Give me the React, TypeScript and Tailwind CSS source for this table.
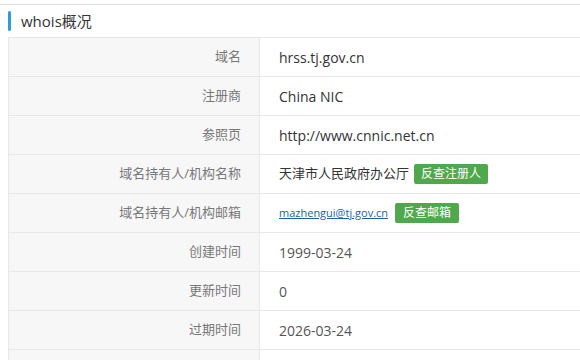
const rows: { label: string; value: React.ReactNode }[] = [
  { label: '域名', value: 'hrss.tj.gov.cn' },
  { label: '注册商', value: 'China NIC' },
  { label: '参照页', value: 'http://www.cnnic.net.cn' },
  {
    label: '域名持有人/机构名称',
    value: (
      <span className="flex items-center gap-[5px]">
        <span className="text-[13px]">天津市人民政府办公厅</span>
        <span className="h-[20px] px-[7px] rounded-[2px] bg-[#4fa84b] text-white text-[12px] leading-[20px]">反查注册人</span>
      </span>
    ),
  },
  {
    label: '域名持有人/机构邮箱',
    value: (
      <span className="flex items-center gap-[5px]">
        <a className="block w-[111px] overflow-hidden whitespace-nowrap text-[11px] text-[#1a5fa8] underline">mazhengui@tj.gov.cn</a>
        <span className="h-[20px] px-[8px] rounded-[2px] bg-[#4fa84b] text-white text-[12px] leading-[20px]">反查邮箱</span>
      </span>
    ),
  },
  { label: '创建时间', value: <span className="text-[#555]">1999-03-24</span> },
  { label: '更新时间', value: <span className="text-[#555]">0</span> },
  { label: '过期时间', value: <span className="text-[#555]">2026-03-24</span> },
];

export default function App() {
  return (
    <div
      className="w-[580px] h-[360px] overflow-hidden bg-white"
      style={{ fontFamily: '"Open Sans", "Noto Sans CJK SC", sans-serif' }}
    >
      <div className="h-[5px] border-b border-[#dcdcdc]" />
      <div className="flex items-center h-[32px] pl-[8px]">
        <span className="w-[3px] h-[20px] rounded-full bg-[#2d9be0]" />
        <span className="ml-[10px] text-[15px] text-[#333]">whois概况</span>
      </div>
      <div className="ml-[8px] border-t border-l border-[#e8e8e8]">
        {rows.map(r => (
          <div key={r.label} className="flex h-[39px] border-b border-[#e8e8e8]">
            <div className="w-[251px] flex-shrink-0 bg-[#f7f7f7] border-r border-[#e8e8e8] flex items-center justify-end pr-[18px] text-[13px] text-[#777]">
              {r.label}
            </div>
            <div className="flex-1 flex items-center pl-[19px] text-[14px] text-[#333]">
              {r.value}
            </div>
          </div>
        ))}
        <div className="flex h-[20px]">
          <div className="w-[251px] bg-[#f7f7f7] border-r border-[#e8e8e8]" />
        </div>
      </div>
    </div>
  );
}
